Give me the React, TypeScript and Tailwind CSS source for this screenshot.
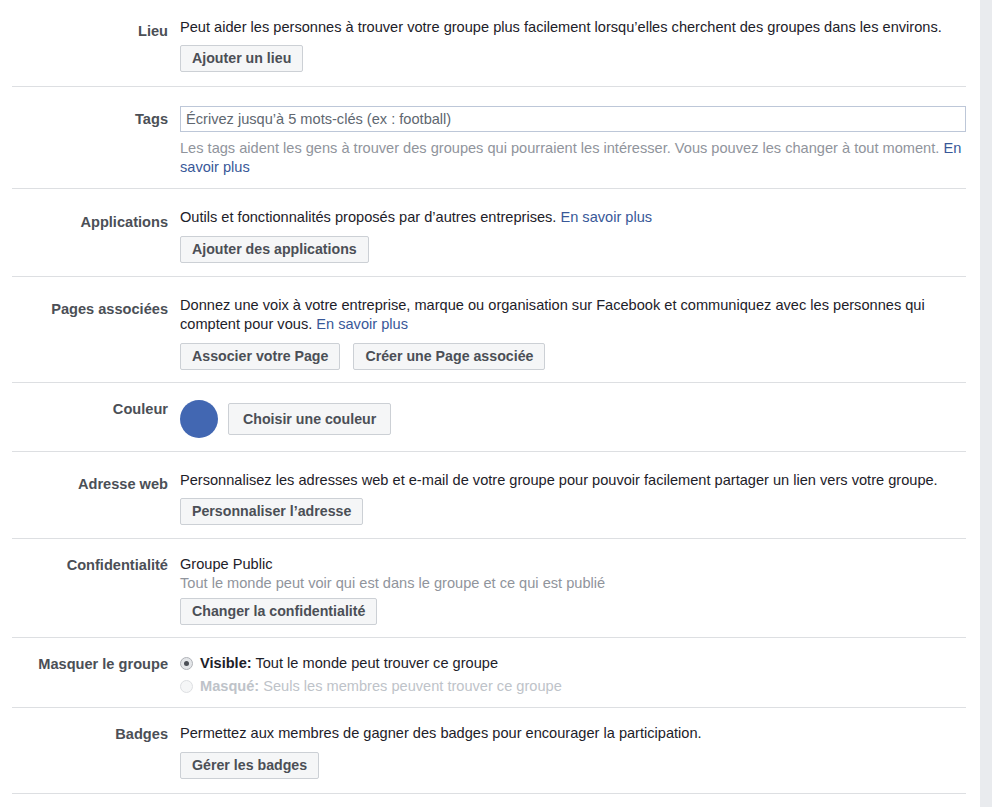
import React from "react";

const font = { fontFamily: '"Liberation Sans", Arial, Helvetica, sans-serif' };

function Btn({ children, big }: { children: React.ReactNode; big?: boolean }) {
  return (
    <button
      className={
        "border border-[#ccd0d5] bg-[#f5f6f7] rounded-[2px] font-bold text-[14.2px] text-[#4b4f56] leading-none " +
        (big ? "h-[32px] px-[14px]" : "h-[27px] px-[11px]")
      }
    >
      {children}
    </button>
  );
}

function Row({
  label,
  labelPt,
  className,
  children,
}: {
  label: string;
  labelPt: string;
  className: string;
  children: React.ReactNode;
}) {
  return (
    <div className={"flex border-b border-[#dddfe2] " + className}>
      <div className={"w-[156px] shrink-0 text-right font-bold text-[14.6px] leading-[19px] text-[#4b4f56] " + labelPt}>
        {label}
      </div>
      <div className="ml-3 flex-1 min-w-0 text-[14.6px] leading-[19px] text-[#1d2129]">{children}</div>
    </div>
  );
}

const Link = ({ children }: { children: React.ReactNode }) => (
  <span className="text-[#385898]">{children}</span>
);

export default function App() {
  return (
    <div className="flex w-full min-h-[807px] bg-white" style={font}>
      <div className="flex-1 min-w-0 pl-[12px] pr-[14px]">
        <Row label="Lieu" labelPt="pt-[4px]" className="pt-[18px] pb-[14px]">
          <div>Peut aider les personnes à trouver votre groupe plus facilement lorsqu’elles cherchent des groupes dans les environs.</div>
          <div className="mt-[8px]">
            <Btn>Ajouter un lieu</Btn>
          </div>
        </Row>

        <Row label="Tags" labelPt="pt-[4px]" className="pt-[19px] pb-[11px]">
          <input
            className="block w-full h-[26px] border border-[#bdc7d8] px-[5px] text-[14.6px] text-[#1d2129] placeholder:text-[#606770] outline-none"
            placeholder="Écrivez jusqu’à 5 mots-clés (ex : football)"
          />
          <div className="mt-[7px] text-[#90949c]">
            Les tags aident les gens à trouver des groupes qui pourraient les intéresser. Vous pouvez les changer à tout moment.{" "}
            <Link>En savoir plus</Link>
          </div>
        </Row>

        <Row label="Applications" labelPt="pt-[5px]" className="pt-[19px] pb-[13px]">
          <div>
            Outils et fonctionnalités proposés par d’autres entreprises. <Link>En savoir plus</Link>
          </div>
          <div className="mt-[9px]">
            <Btn>Ajouter des applications</Btn>
          </div>
        </Row>

        <Row label="Pages associées" labelPt="pt-[4px]" className="pt-[19px] pb-[12px]">
          <div>
            Donnez une voix à votre entreprise, marque ou organisation sur Facebook et communiquez avec les personnes qui comptent pour vous.{" "}
            <Link>En savoir plus</Link>
          </div>
          <div className="mt-[9px] flex gap-[13px]">
            <Btn>Associer votre Page</Btn>
            <Btn>Créer une Page associée</Btn>
          </div>
        </Row>

        <Row label="Couleur" labelPt="pt-0" className="pt-[17px] pb-[13px]">
          <div className="flex items-center gap-[10px]">
            <div className="w-[38px] h-[38px] rounded-full bg-[#4267b2]" />
            <Btn big>Choisir une couleur</Btn>
          </div>
        </Row>

        <Row label="Adresse web" labelPt="pt-[4px]" className="pt-[19px] pb-[13px]">
          <div>Personnalisez les adresses web et e-mail de votre groupe pour pouvoir facilement partager un lien vers votre groupe.</div>
          <div className="mt-[8px]">
            <Btn>Personnaliser l’adresse</Btn>
          </div>
        </Row>

        <Row label="Confidentialité" labelPt="pt-[1px]" className="pt-[16px] pb-[12px]">
          <div>Groupe Public</div>
          <div className="text-[#90949c]">Tout le monde peut voir qui est dans le groupe et ce qui est publié</div>
          <div className="mt-[5px]">
            <Btn>Changer la confidentialité</Btn>
          </div>
        </Row>

        <Row label="Masquer le groupe" labelPt="pt-[3px]" className="pt-[14px] pb-[9px]">
          <div className="flex items-center h-[23px]">
            <span className="w-[13px] h-[13px] rounded-full border border-[#b0b3b8] bg-[#e4e6e9] flex items-center justify-center shrink-0">
              <span className="w-[5px] h-[5px] rounded-full bg-[#4b4f56]" />
            </span>
            <span className="ml-[7px]">
              <span className="font-bold">Visible:</span> Tout le monde peut trouver ce groupe
            </span>
          </div>
          <div className="flex items-center h-[23px] text-[#bec3c9]">
            <span className="w-[13px] h-[13px] rounded-full border border-[#dddfe2] bg-[#f5f6f7] shrink-0" />
            <span className="ml-[7px]">
              <span className="font-bold">Masqué:</span> Seuls les membres peuvent trouver ce groupe
            </span>
          </div>
        </Row>

        <Row label="Badges" labelPt="pt-[1px]" className="pt-[16px] pb-[14px]">
          <div>Permettez aux membres de gagner des badges pour encourager la participation.</div>
          <div className="mt-[9px]">
            <Btn>Gérer les badges</Btn>
          </div>
        </Row>
      </div>
      <div className="w-[12px] shrink-0 bg-[#e9ebee]" />
    </div>
  );
}
